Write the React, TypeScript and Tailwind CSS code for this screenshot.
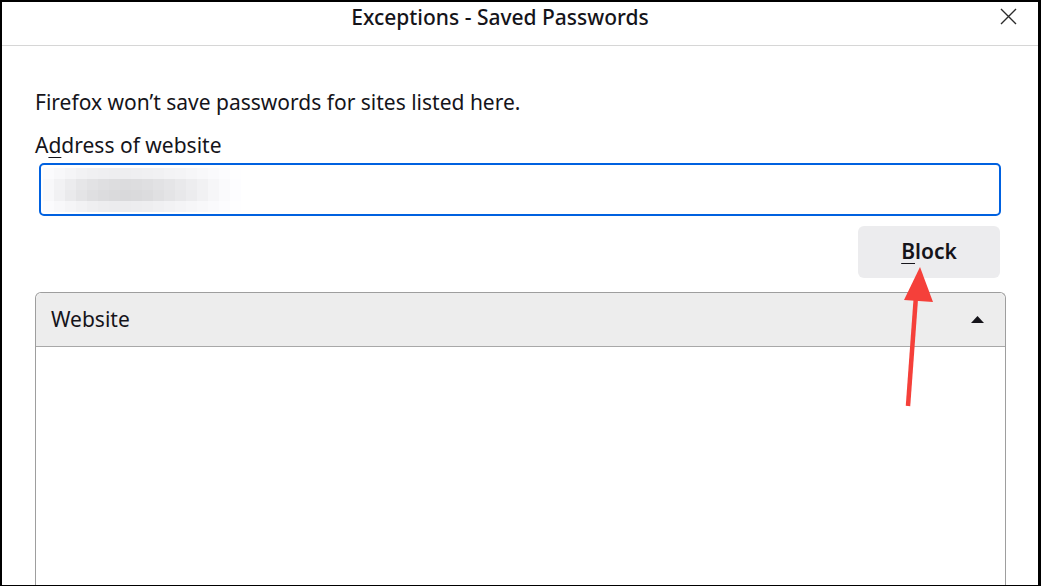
import React from "react";

// blurred (pixelated) address in the input
const blurRows = [
  [251, 248, 245, 242, 240, 239, 238, 238, 239, 240, 241, 243, 244, 246, 248, 250, 252, 254, 255],
  [248, 242, 236, 230, 226, 223, 221, 220, 221, 223, 226, 229, 233, 237, 241, 246, 250, 253, 255],
  [248, 241, 234, 228, 223, 220, 218, 217, 218, 220, 224, 228, 232, 236, 241, 246, 250, 253, 255],
  [251, 248, 245, 242, 239, 237, 236, 236, 237, 238, 240, 242, 244, 246, 248, 250, 252, 254, 255],
];

const BlurredText = () => (
  <div className="flex flex-col">
    {blurRows.map((row, i) => (
      <div key={i} className="flex">
        {row.map((v, j) => (
          <div
            key={j}
            className="w-[11px] h-[11px]"
            style={{ backgroundColor: `rgb(${v},${v},${Math.min(255, v + 2)})` }}
          />
        ))}
      </div>
    ))}
  </div>
);

export default function App() {
  return (
    <div
      className="relative w-[1041px] h-[586px] overflow-hidden bg-black pl-[2px] pt-[2px] pr-[3px] pb-[1px]"
      style={{ fontFamily: '"Noto Sans", "Open Sans", sans-serif' }}
    >
      <div className="flex h-full flex-col bg-white text-[#15141a]">
        {/* title bar */}
        <div className="relative flex h-[44px] shrink-0 items-start justify-center border-b border-[#d6d6d6] pr-[40px] pt-[1px]">
          <span className="text-[21px] leading-[28px] font-medium">Exceptions - Saved Passwords</span>
          <svg
            className="absolute right-[21px] top-[6px]"
            width="17"
            height="17"
            viewBox="0 0 17 17"
            fill="none"
            stroke="#2b2b2b"
            strokeWidth="1.4"
          >
            <path d="M1 1L16 16M16 1L1 16" />
          </svg>
        </div>

        {/* body */}
        <div className="flex flex-1 flex-col pl-[33px] pr-[32px]">
          <p className="mt-[42px] text-[21px] leading-[28px]">
            Firefox won’t save passwords for sites listed here.
          </p>
          <label className="mt-[15px] text-[21px] leading-[28px]">
            A<span className="underline decoration-1 underline-offset-[4px]">d</span>dress of website
          </label>
          <div className="ml-[4px] mr-[5px] mt-[4px] flex h-[53px] items-center rounded-[5px] border-2 border-[#0061e0] pl-[2px]">
            <BlurredText />
          </div>
          <div className="mr-[6px] mt-[10px] flex justify-end">
            <button className="flex h-[52px] w-[142px] items-center justify-center rounded-[6px] bg-[#ececee] text-[21px] font-semibold">
              <span className="underline decoration-1 underline-offset-[4px]">B</span>lock
            </button>
          </div>
          <div className="mt-[14px] flex flex-1 flex-col rounded-t-[6px] border border-b-0 border-[#9e9e9e]">
            <div className="flex h-[54px] shrink-0 items-center justify-between rounded-t-[6px] border-b border-[#a8a8a8] bg-[#ededed] pl-[15px] pr-[21px]">
              <span className="text-[21px]">Website</span>
              <svg width="13" height="7" viewBox="0 0 13 7">
                <path d="M0 7L6.5 0L13 7Z" fill="#15141a" />
              </svg>
            </div>
            <div className="flex-1 bg-white" />
          </div>
        </div>
      </div>

      {/* red annotation arrow */}
      <svg className="absolute left-0 top-0" width="1041" height="586" viewBox="0 0 1041 586">
        <line x1="908" y1="406" x2="916" y2="296" stroke="#f5403a" strokeWidth="4.5" />
        <path d="M920 267L933 302L904 300Z" fill="#f5403a" />
      </svg>
    </div>
  );
}
